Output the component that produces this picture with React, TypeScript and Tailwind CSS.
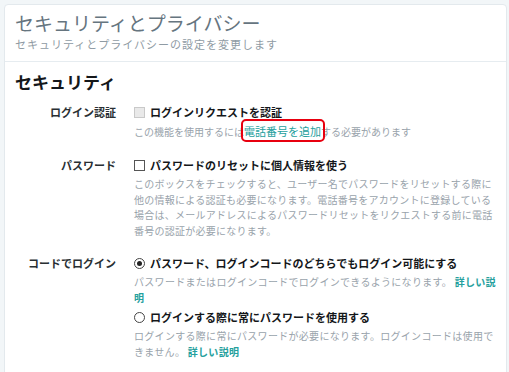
import React from "react";

// Settings page: security & privacy section

const font = { fontFamily: '"Noto Sans CJK JP", "Noto Sans", sans-serif' };

function Checkbox({ disabled }: { disabled?: boolean }) {
  return disabled ? (
    <span className="inline-block w-[11px] h-[11px] border border-[#c9c9c9] bg-[#e9e9e9] shrink-0" />
  ) : (
    <span className="inline-block w-[11px] h-[11px] border border-[#555] bg-white shrink-0" />
  );
}

function Radio({ checked }: { checked?: boolean }) {
  return (
    <span className="w-[11px] h-[11px] rounded-full border border-[#444] bg-white flex items-center justify-center shrink-0">
      {checked && <span className="w-[5px] h-[5px] rounded-full bg-[#222]" />}
    </span>
  );
}

function Link({ children }: { children: React.ReactNode }) {
  return <span className="text-[#25a09d] font-semibold">{children}</span>;
}

export default function App() {
  return (
    <div className="min-h-[372px] bg-[#f2f6f8] pt-1 pl-1 pr-[2px]" style={font}>
      <div className="bg-white border border-[#e3e9ed] rounded-[4px] min-h-[380px]">
        {/* header */}
        <div className="px-[10px] pt-[6px] pb-[10px] border-b border-[#e6ecf0]">
          <h1 className="text-[19px] leading-[24px] text-[#66757f] font-normal">
            セキュリティとプライバシー
          </h1>
          <p className="mt-[2px] text-[11px] leading-[14px] tracking-[1px] text-[#8f9ba4]">
            セキュリティとプライバシーの設定を変更します
          </p>
        </div>

        {/* security */}
        <div className="px-[10px] pt-[9px]">
          <h2 className="text-[17px] leading-[22px] font-bold text-[#14171a]">セキュリティ</h2>

          <div className="mt-[11px] grid grid-cols-[101px_1fr] gap-x-[18px] gap-y-[17px]">
            {/* login verification */}
            <div className="text-right text-[11px] leading-[16px] font-bold text-[#292f33]">ログイン認証</div>
            <div>
              <div className="flex items-center gap-[5px] h-[16px]">
                <Checkbox disabled />
                <span className="text-[11px] leading-[16px] font-bold text-[#14171a]">ログインリクエストを認証</span>
              </div>
              <p className="mt-[3px] text-[10px] leading-[16px] text-[#99a3ab] whitespace-nowrap">
                この機能を使用するには
                <span className="relative">
                  <span className="text-[#25a09d] text-[11px]">電話番号を追加</span>
                  <span className="absolute -left-[3px] -right-[4px] -top-[5px] -bottom-[3px] border-2 border-[#e8000f] rounded-[5px]" />
                </span>
                する必要があります
              </p>
            </div>

            {/* password reset */}
            <div className="text-right text-[11px] leading-[16px] font-bold text-[#292f33]">パスワード</div>
            <div>
              <div className="flex items-center gap-[5px] h-[16px]">
                <Checkbox />
                <span className="text-[11px] leading-[16px] font-bold text-[#14171a]">パスワードのリセットに個人情報を使う</span>
              </div>
              <p className="mt-[3px] text-[10px] leading-[15.6px] tracking-[0.25px] text-[#99a3ab] whitespace-nowrap">
                このボックスをチェックすると、ユーザー名でパスワードをリセットする際に
                <br />
                他の情報による認証も必要になります。電話番号をアカウントに登録している
                <br />
                場合は、メールアドレスによるパスワードリセットをリクエストする前に電話
                <br />
                番号の認証が必要になります。
              </p>
            </div>

            {/* login with code */}
            <div className="text-right text-[11px] leading-[16px] font-bold text-[#292f33]">コードでログイン</div>
            <div>
              <div className="flex items-center gap-[5px] h-[16px]">
                <Radio checked />
                <span className="text-[11px] leading-[16px] font-bold text-[#14171a]">
                  パスワード、ログインコードのどちらでもログイン可能にする
                </span>
              </div>
              <p className="mt-[3px] text-[10px] leading-[15.5px] tracking-[0.3px] text-[#99a3ab] whitespace-nowrap">
                パスワードまたはログインコードでログインできるようになります。 <Link>詳しい説</Link>
                <br />
                <Link>明</Link>
              </p>

              <div className="mt-[4px] flex items-center gap-[5px] h-[16px]">
                <Radio />
                <span className="text-[11px] leading-[16px] font-bold text-[#14171a]">
                  ログインする際に常にパスワードを使用する
                </span>
              </div>
              <p className="mt-[3px] text-[10px] leading-[15.5px] tracking-[0.3px] text-[#99a3ab] whitespace-nowrap">
                ログインする際に常にパスワードが必要になります。ログインコードは使用で
                <br />
                きません。 <Link>詳しい説明</Link>
              </p>
            </div>
          </div>
        </div>
      </div>
    </div>
  );
}
